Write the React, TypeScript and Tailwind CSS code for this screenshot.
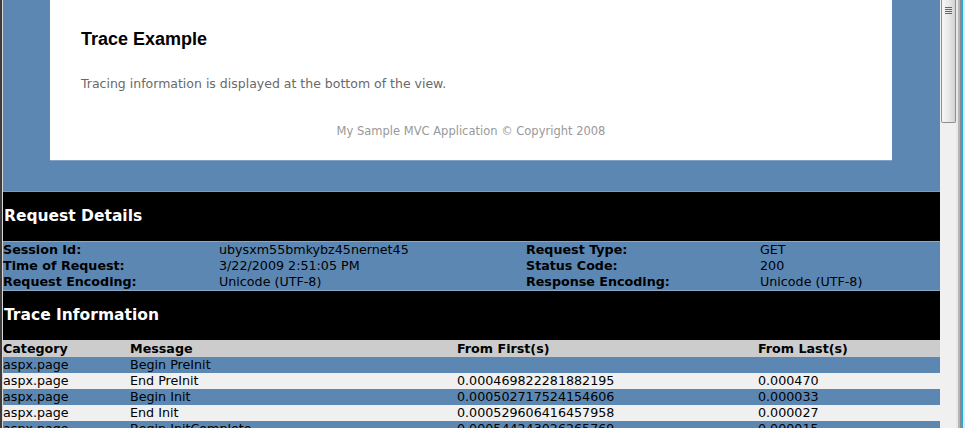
import React from 'react';

type Detail = { label: string; value: string };

const leftDetails: Detail[] = [
  { label: 'Session Id:', value: 'ubysxm55bmkybz45nernet45' },
  { label: 'Time of Request:', value: '3/22/2009 2:51:05 PM' },
  { label: 'Request Encoding:', value: 'Unicode (UTF-8)' },
];

const rightDetails: Detail[] = [
  { label: 'Request Type:', value: 'GET' },
  { label: 'Status Code:', value: '200' },
  { label: 'Response Encoding:', value: 'Unicode (UTF-8)' },
];

const traceRows = [
  { category: 'aspx.page', message: 'Begin PreInit', first: '', last: '' },
  { category: 'aspx.page', message: 'End PreInit', first: '0.000469822281882195', last: '0.000470' },
  { category: 'aspx.page', message: 'Begin Init', first: '0.000502717524154606', last: '0.000033' },
  { category: 'aspx.page', message: 'End Init', first: '0.000529606416457958', last: '0.000027' },
  { category: 'aspx.page', message: 'Begin InitComplete', first: '0.000544243026265769', last: '0.000015' },
];

const verdana = { fontFamily: '"DejaVu Sans", Verdana, sans-serif' };

const SectionHeader = ({ title }: { title: string }) => (
  <div className="h-[49px] shrink-0 bg-black flex items-center pl-[1px]">
    <h3 className="text-white font-bold text-[15.5px] leading-none">{title}</h3>
  </div>
);

const ScrollBar = () => (
  <div className="flex h-full shrink-0">
    <div className="w-[16px] bg-[#f0f0f0] pl-[1px]">
      <div className="h-[123px] w-[15px] rounded-b-[2px] border border-t-0 border-[#8e8e8e] bg-gradient-to-r from-[#f7f7f7] via-[#e9e9e9] to-[#d2d2d2] flex justify-center pt-[7px]">
        <div className="flex flex-col gap-[1px] w-[7px]">
          <div className="h-[1px] bg-[#666]" />
          <div className="h-[1px] bg-[#666]" />
          <div className="h-[1px] bg-[#666]" />
          <div className="h-[1px] bg-[#666]" />
        </div>
      </div>
    </div>
    <div className="w-[2px] bg-[#e9e9e9]" />
    <div className="w-[2px] bg-[#b5b5b5]" />
    <div className="w-[2px] bg-[#8a8a8a]" />
    <div className="w-[1px] bg-[#2aa6dc]" />
    <div className="w-[2px] bg-[#d6eef6]" />
  </div>
);

export default function App() {
  return (
    <div className="w-[966px] h-[428px] overflow-hidden flex bg-white" style={verdana}>
      <div className="w-[2px] bg-[#3c3c3c] shrink-0" />
      <div className="w-[1px] bg-[#d8d8d8] shrink-0" />
      <div className="w-[937px] shrink-0 flex flex-col bg-[#5c87b2]">
        {/* site page */}
        <div className="pb-[30px] shrink-0">
          <div className="ml-[47px] w-[842px] h-[161px] bg-white border-b border-[#7fa2c6] pl-[31px] pt-[29px]">
            <h2 className="text-[18px] font-bold text-black leading-[20px]" style={{ fontFamily: '"Liberation Sans", Arial, sans-serif' }}>
              Trace Example
            </h2>
            <p className="mt-[27px] text-[12.5px] text-[#696969] leading-[16px]">
              Tracing information is displayed at the bottom of the view.
            </p>
            <div className="mt-[32px] pr-[31px] text-center text-[11.5px] text-[#999999] leading-[14px]">
              My Sample MVC Application © Copyright 2008
            </div>
          </div>
        </div>

        <div className="border-t border-[#7a9cc0] shrink-0">
          <SectionHeader title="Request Details" />
        </div>
        <div className="shrink-0 border-y border-[#8aa9c9] bg-[#5c87b2] text-[12.7px] leading-[16px] text-black grid grid-cols-[216px_307px_234px_1fr]">
          {leftDetails.map((d, i) => (
            <React.Fragment key={d.label}>
              <div className="font-bold">{d.label}</div>
              <div>{d.value}</div>
              <div className="font-bold">{rightDetails[i].label}</div>
              <div>{rightDetails[i].value}</div>
            </React.Fragment>
          ))}
        </div>

        <SectionHeader title="Trace Information" />
        <div className="shrink-0 text-[12.7px] leading-[16px] text-black">
          <div className="grid grid-cols-[127px_327px_301px_1fr] bg-[#cccccc] font-bold h-[17px] pt-[1px]">
            <div>Category</div>
            <div>Message</div>
            <div>From First(s)</div>
            <div>From Last(s)</div>
          </div>
          {traceRows.map((r, i) => (
            <div
              key={r.message}
              className={`grid grid-cols-[127px_327px_301px_1fr] h-[16px] ${i % 2 === 0 ? 'bg-[#5c87b2]' : 'bg-[#f0f0f0]'}`}
            >
              <div>{r.category}</div>
              <div>{r.message}</div>
              <div>{r.first}</div>
              <div>{r.last}</div>
            </div>
          ))}
        </div>
      </div>
      <ScrollBar />
    </div>
  );
}
